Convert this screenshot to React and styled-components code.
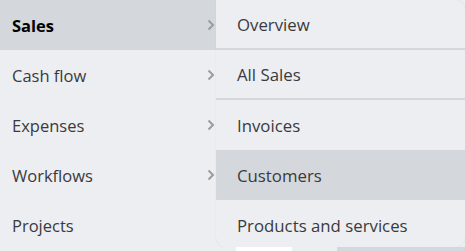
import React from "react";
import styled, { createGlobalStyle } from "styled-components";

const Global = createGlobalStyle`
  html, body { margin: 0; padding: 0; background: #eceef1; }
  body { font-family: "Open Sans", "Noto Sans", sans-serif; }
`;

const Page = styled.div`
  display: flex;
  width: 465px;
  height: 251px;
  overflow: hidden;
  background: #eceef1;
`;

const NavColumn = styled.ul`
  list-style: none;
  margin: 0;
  padding: 0;
  width: 216px;
  flex: none;
`;

const NavItem = styled.li`
  display: flex;
  align-items: center;
  justify-content: space-between;
  height: 50px;
  padding: 0 0 0 12px;
  box-sizing: border-box;
  background: ${(p) => (p.$active ? "#d4d7dc" : "transparent")};
  color: ${(p) => (p.$active ? "#000" : "#393a3d")};
  font-size: 16.5px;
  font-weight: ${(p) => (p.$active ? 700 : 400)};
`;

const Chevron = styled.svg`
  width: 8px;
  height: 12px;
  margin-right: 1px;
`;

const RightColumn = styled.div`
  display: flex;
  flex-direction: column;
  flex: 1;
`;

const Panel = styled.ul`
  list-style: none;
  margin: 0;
  padding: 0;
  height: 247px;
  background: #eceef1;
  border-radius: 0 9px 9px 9px;
  overflow: hidden;
  box-shadow: 0 0 1px rgba(0, 0, 0, 0.12);
`;

const PanelItem = styled.li`
  display: flex;
  align-items: center;
  height: 50px;
  padding-left: 21px;
  box-sizing: border-box;
  font-size: 16.8px;
  color: #393a3d;
  background: ${(p) => (p.$active ? "#d4d7dc" : "transparent")};
  border-bottom: ${(p) => (p.$divider ? "2px solid #d4d7dc" : "none")};
`;

const Footer = styled.div`
  display: flex;
  height: 4px;
`;

const FooterSeg = styled.div`
  width: ${(p) => p.$w}px;
  flex: ${(p) => (p.$grow ? 1 : "none")};
  background: ${(p) => p.$c};
`;

const ChevronIcon = () => (
  <Chevron viewBox="0 0 8 12">
    <path d="M1.5 1.5 L6 6 L1.5 10.5" fill="none" stroke="#9a9ca0" strokeWidth="2" />
  </Chevron>
);

const left = [
  { label: "Sales", active: true, chevron: true },
  { label: "Cash flow", chevron: true },
  { label: "Expenses", chevron: true },
  { label: "Workflows", chevron: true },
  { label: "Projects" },
];

const right = [
  { label: "Overview", divider: true },
  { label: "All Sales", divider: true },
  { label: "Invoices" },
  { label: "Customers", active: true },
  { label: "Products and services" },
];

export default function App() {
  return (
    <>
      <Global />
      <Page>
        <NavColumn>
          {left.map((i) => (
            <NavItem key={i.label} $active={i.active}>
              <span>{i.label}</span>
              {i.chevron && <ChevronIcon />}
            </NavItem>
          ))}
        </NavColumn>
        <RightColumn>
          <Panel>
            {right.map((i) => (
              <PanelItem key={i.label} $active={i.active} $divider={i.divider}>
                {i.label}
              </PanelItem>
            ))}
          </Panel>
          <Footer>
            <FooterSeg $w={20} $c="#eceef1" />
            <FooterSeg $w={56} $c="#ffffff" />
            <FooterSeg $w={45} $c="#eceef1" />
            <FooterSeg $grow $c="#d4d7dc" />
          </Footer>
        </RightColumn>
      </Page>
    </>
  );
}
